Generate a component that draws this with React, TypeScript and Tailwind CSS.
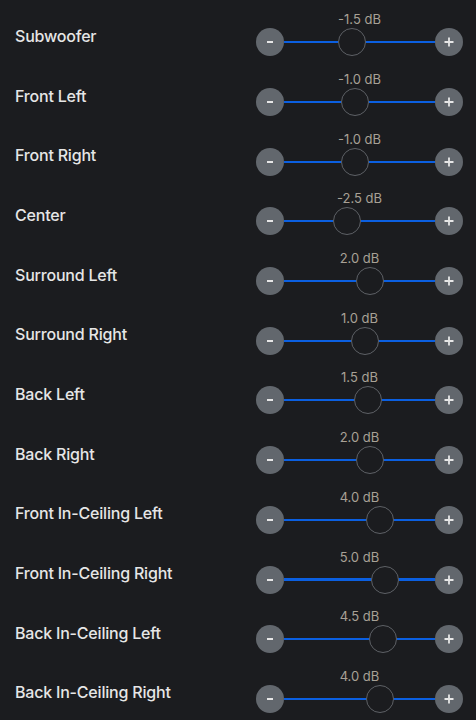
import React from 'react';

type Channel = { name: string; value: number; active?: boolean };

const channels: Channel[] = [
  { name: 'Subwoofer', value: -1.5 },
  { name: 'Front Left', value: -1.0 },
  { name: 'Front Right', value: -1.0 },
  { name: 'Center', value: -2.5 },
  { name: 'Surround Left', value: 2.0 },
  { name: 'Surround Right', value: 1.0 },
  { name: 'Back Left', value: 1.5 },
  { name: 'Back Right', value: 2.0 },
  { name: 'Front In-Ceiling Left', value: 4.0 },
  { name: 'Front In-Ceiling Right', value: 5.0, active: true },
  { name: 'Back In-Ceiling Left', value: 4.5 },
  { name: 'Back In-Ceiling Right', value: 4.0 },
];

const MIN = -12;
const MAX = 12;

function StepButton({ kind }: { kind: 'minus' | 'plus' }) {
  return (
    <button className="w-7 h-7 shrink-0 rounded-full bg-[#62676d] flex items-center justify-center">
      <svg width="12" height="12" viewBox="0 0 12 12" fill="none">
        {kind === 'minus' ? (
          <path d="M3 6h6" stroke="#e6e6e6" strokeWidth="2" />
        ) : (
          <path d="M1.5 6h9M6 1.5v9" stroke="#e6e6e6" strokeWidth="1.8" />
        )}
      </svg>
    </button>
  );
}

function LevelSlider({ value, active }: { value: number; active?: boolean }) {
  const pct = (value - MIN) / (MAX - MIN);
  const left = 1 + pct * 122;
  const label = `${value.toFixed(1)} dB`;

  return (
    <div className="flex flex-col w-[207px]">
      <div className="h-4 mb-[1px] text-center text-[13px] leading-4 text-[#a8a196]">{label}</div>
      <div className="flex items-center h-7">
        <StepButton kind="minus" />
        <div className="relative flex-1 h-7 flex items-center">
          <div className={`w-full bg-[#0b5fe0] ${active ? 'h-[3px]' : 'h-[2px]'}`} />
          <div
            className="absolute top-0 w-7 h-7 rounded-full bg-[#1b1c1f] border border-[#5e6166]"
            style={{ left }}
          />
        </div>
        <StepButton kind="plus" />
      </div>
    </div>
  );
}

export default function App() {
  return (
    <div
      className="w-[476px] h-[720px] overflow-hidden bg-[#1b1c1f] pt-[4px]"
      style={{ fontFamily: 'Inter, "Liberation Sans", sans-serif' }}
    >
      {channels.map((ch) => (
        <div key={ch.name} className="h-[59.7px] flex items-center justify-between pl-[15px] pr-[13px]">
          <span className="mt-[4px] text-[16px] font-medium text-[#e6e6e6] tracking-[-0.2px]">{ch.name}</span>
          <LevelSlider value={ch.value} active={ch.active} />
        </div>
      ))}
    </div>
  );
}
